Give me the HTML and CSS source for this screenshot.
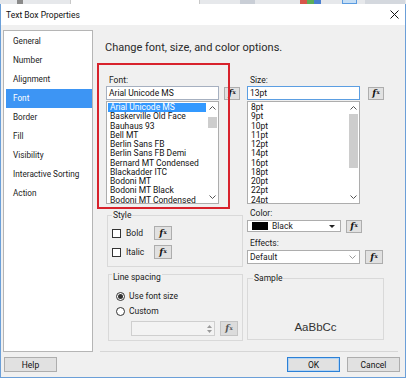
FILE: index.html
```html
<!DOCTYPE html>
<html>
<head>
<meta charset="utf-8">
<title>Text Box Properties</title>
<link rel="stylesheet" href="styles.css">
</head>
<body>
<div class="toolbar">
  <span class="tb tb-l"></span><span class="tb tb-dark"></span><span class="tb tb-gap1"></span><span class="tb tb-input"></span><span class="tb tb-gap2"></span><span class="tb tb-icon"></span><span class="tb tb-gap3"></span><span class="tb tb-red"></span><span class="tb tb-green"></span><span class="tb tb-blue"></span><span class="tb tb-gap4"></span><span class="tb tb-sel"></span><span class="tb tb-gap5"></span><span class="tb tb-icon2"></span>
</div>
<div class="window">
  <div class="titlebar">
    <span class="title">Text Box Properties</span>
    <svg class="close" viewBox="0 0 9 9" width="9" height="9"><path d="M0.5 0.5 L8.5 8.5 M8.5 0.5 L0.5 8.5" stroke="#111" stroke-width="1" fill="none"/></svg>
  </div>
  <div class="body">
    <ul class="nav">
      <li>General</li>
      <li>Number</li>
      <li>Alignment</li>
      <li class="active">Font</li>
      <li>Border</li>
      <li>Fill</li>
      <li>Visibility</li>
      <li>Interactive Sorting</li>
      <li>Action</li>
    </ul>
    <div class="main">
      <h1 class="heading">Change font, size, and color options.</h1>
      <div class="cols">
        <div class="col">
          <div class="lbl">Font:</div>
          <div class="row">
            <div class="input">Arial Unicode MS</div>
            <span class="fx"><i>f</i><sub>x</sub></span>
          </div>
          <div class="list">
            <ul class="items">
              <li class="sel">Arial Unicode MS</li>
              <li>Baskerville Old Face</li>
              <li>Bauhaus 93</li>
              <li>Bell MT</li>
              <li>Berlin Sans FB</li>
              <li>Berlin Sans FB Demi</li>
              <li>Bernard MT Condensed</li>
              <li>Blackadder ITC</li>
              <li>Bodoni MT</li>
              <li>Bodoni MT Black</li>
              <li>Bodoni MT Condensed</li>
            </ul>
            <div class="scroll">
              <div class="sarrow"><svg width="7" height="4" viewBox="0 0 7 4"><polyline points="0.5,3.5 3.5,0.5 6.5,3.5" fill="none" stroke="#555" stroke-width="1"/></svg></div>
              <div class="strack"><div class="thumb thumb-font"></div></div>
              <div class="sarrow"><svg width="7" height="4" viewBox="0 0 7 4"><polyline points="0.5,0.5 3.5,3.5 6.5,0.5" fill="none" stroke="#555" stroke-width="1"/></svg></div>
            </div>
          </div>
          <fieldset class="group style-group">
            <legend>Style</legend>
            <div class="chk-row">
              <span class="chk"></span><span class="chk-label">Bold</span>
              <span class="fx fx-lg"><i>f</i><sub>x</sub></span>
            </div>
            <div class="chk-row">
              <span class="chk"></span><span class="chk-label">Italic</span>
              <span class="fx fx-lg"><i>f</i><sub>x</sub></span>
            </div>
          </fieldset>
          <fieldset class="group spacing-group">
            <legend>Line spacing</legend>
            <div class="radio-row first">
              <span class="radio on"></span><span class="radio-label">Use font size</span>
            </div>
            <div class="radio-row">
              <span class="radio"></span><span class="radio-label">Custom</span>
            </div>
            <div class="spin-row">
              <div class="spinner">
                <div class="spin-btns">
                  <svg width="5" height="3" viewBox="0 0 5 3"><polygon points="0,3 2.5,0 5,3" fill="#9a9a9a"/></svg>
                  <svg width="5" height="3" viewBox="0 0 5 3"><polygon points="0,0 2.5,3 5,0" fill="#9a9a9a"/></svg>
                </div>
              </div>
              <span class="fx fx-lg fx-dis"><i>f</i><sub>x</sub></span>
            </div>
          </fieldset>
        </div>
        <div class="col">
          <div class="lbl">Size:</div>
          <div class="row">
            <div class="input focus">13pt</div>
            <span class="fx fx-far"><i>f</i><sub>x</sub></span>
          </div>
          <div class="list">
            <ul class="items">
              <li>8pt</li>
              <li>9pt</li>
              <li>10pt</li>
              <li>11pt</li>
              <li>12pt</li>
              <li>14pt</li>
              <li>16pt</li>
              <li>18pt</li>
              <li>20pt</li>
              <li>22pt</li>
              <li>24pt</li>
            </ul>
            <div class="scroll">
              <div class="sarrow"><svg width="7" height="4" viewBox="0 0 7 4"><polyline points="0.5,3.5 3.5,0.5 6.5,3.5" fill="none" stroke="#555" stroke-width="1"/></svg></div>
              <div class="strack"><div class="thumb thumb-size"></div></div>
              <div class="sarrow"><svg width="7" height="4" viewBox="0 0 7 4"><polyline points="0.5,0.5 3.5,3.5 6.5,0.5" fill="none" stroke="#555" stroke-width="1"/></svg></div>
            </div>
          </div>
          <div class="lbl lbl-color">Color:</div>
          <div class="row">
            <div class="dropdown color-dd">
              <span class="swatch"></span><span class="dd-text">Black</span>
              <svg class="dd-arrow" width="6" height="3" viewBox="0 0 6 3"><polygon points="0,0 6,0 3,3" fill="#222"/></svg>
            </div>
            <span class="fx"><i>f</i><sub>x</sub></span>
          </div>
          <div class="lbl lbl-effects">Effects:</div>
          <div class="row row-effects">
            <div class="dropdown effects-dd">
              <span class="dd-text">Default</span>
              <svg class="dd-chev" width="7" height="4" viewBox="0 0 7 4"><polyline points="0.5,0.5 3.5,3.5 6.5,0.5" fill="none" stroke="#999" stroke-width="1"/></svg>
            </div>
            <span class="fx fx-lg"><i>f</i><sub>x</sub></span>
          </div>
          <fieldset class="group sample-group">
            <legend>Sample</legend>
            <div class="sample">AaBbCc</div>
          </fieldset>
        </div>
      </div>
    </div>
  </div>
  <div class="footer">
    <span class="btn btn-help">Help</span>
    <span class="btn btn-ok">OK</span>
    <span class="btn btn-cancel">Cancel</span>
  </div>
  <div class="annot"></div>
</div>
</body>
</html>
```
FILE: styles.css
```css
* { box-sizing: border-box; }
html, body { margin: 0; padding: 0; }
body {
  width: 406px;
  height: 380px;
  overflow: hidden;
  background: #ffffff;
  font-family: Roboto, "Noto Sans", sans-serif;
  font-size: 8.5px;
  color: #1a1a1a;
}

/* toolbar remnant */
.toolbar { height: 4px; display: flex; background: #e6e8eb; }
.tb { display: block; height: 4px; }
.tb-l { width: 17px; }
.tb-dark { width: 6px; background: #8a8a8a; }
.tb-gap1 { width: 47px; }
.tb-input { width: 130px; background: #ffffff; border-left: 1px solid #c8c8c8; border-right: 1px solid #c8c8c8; }
.tb-gap2 { width: 40px; }
.tb-icon { width: 15px; background: #c9ced6; }
.tb-gap3 { width: 45px; }
.tb-red { width: 7px; background: #d8564a; }
.tb-green { width: 7px; background: #5cae58; }
.tb-blue { width: 7px; background: #4a7fd0; }
.tb-gap4 { width: 21px; }
.tb-sel { width: 15px; background: #c5def5; border: 1px solid #5a9be0; border-top: none; }
.tb-gap5 { width: 8px; }
.tb-icon2 { width: 40px; background: #d4d8de; }

/* window */
.window {
  position: relative;
  width: 406px;
  border: 1px solid #6b9fd8;
  border-top: none;
}
.titlebar {
  height: 21px;
  background: #ffffff;
  display: flex;
  align-items: center;
  justify-content: space-between;
  padding: 0 6px 0 5px;
}
.title { font-size: 8.5px; color: #111; }
.close { display: block; }

.body {
  height: 327px;
  background: #f0f0f0;
  display: flex;
  padding: 5px 7px 0 2px;
}

/* navigation */
.nav {
  list-style: none;
  margin: 0;
  padding: 1px 0 0;
  width: 90px;
  height: 322px;
  flex: none;
  background: #ffffff;
  border: 1px solid #b5b5b5;
}
.nav li {
  height: 19px;
  line-height: 19px;
  margin-left: 2px;
  padding-left: 7px;
  color: #222;
  white-space: nowrap;
  font-size: 8.2px;
}
.nav li.active { background: #3d95f4; color: #ffffff; }

/* main panel */
.main {
  flex: 1;
  margin-left: 7px;
  padding: 10px 0 0 6px;
  border-bottom: 1px solid #d6d6d6;
}
.heading {
  margin: 0 0 0 -1px;
  font-size: 11px;
  line-height: 16px;
  font-weight: normal;
  color: #2a2a2a;
}
.cols {
  display: grid;
  grid-template-columns: 137px 137px;
  column-gap: 4px;
  align-items: start;
  margin-top: 18px;
}
.col { display: flex; flex-direction: column; align-items: flex-start; }
.lbl { height: 12px; line-height: 12px; padding-left: 3px; }
.lbl-color { margin-top: 3px; }
.lbl-effects { margin-top: 4px; }
.row { display: flex; align-items: center; height: 14px; }
.row-effects { margin-top: 1px; }

.input {
  width: 113px;
  height: 14px;
  line-height: 12px;
  padding-left: 2px;
  background: #ffffff;
  border: 1px solid #a6b0c0;
  color: #111;
  white-space: nowrap;
}
.input.focus { border-color: #5b9ee2; }

.fx {
  display: flex;
  align-items: center;
  justify-content: center;
  width: 16px;
  height: 13px;
  margin-left: 5px;
  background: #e1e1e1;
  border: 1px solid #adadad;
  font-family: "DejaVu Serif", serif;
  color: #111;
  line-height: 1;
}
.fx i { font-style: italic; font-weight: bold; font-size: 9px; }
.fx sub { font-size: 5.5px; font-weight: bold; vertical-align: -1px; margin-left: 0.5px; }
.fx-far { margin-left: 8px; }
.fx-lg { width: 18px; height: 14px; }
.fx-dis { height: 15px; background: #dcdcdc; border-color: #c4c4c4; color: #555; }

/* list boxes */
.list {
  margin-top: 1px;
  width: 113px;
  height: 103px;
  display: flex;
  background: #ffffff;
  border: 1px solid #adadad;
  overflow: hidden;
}
.items {
  flex: 1;
  list-style: none;
  margin: 0;
  padding: 1px 1px 0 1px;
  overflow: hidden;
}
.items li {
  height: 9.25px;
  line-height: 9.25px;
  padding-left: 2px;
  white-space: nowrap;
  color: #111;
}
.items li.sel { background: #3399ff; color: #ffffff; }
.scroll { width: 11px; flex: none; display: flex; flex-direction: column; background: #ffffff; }
.sarrow { height: 12px; display: flex; align-items: center; justify-content: center; }
.sarrow svg { display: block; }
.strack { flex: 1; }
.thumb { margin: 0 1px; background: #cdcdcd; }
.thumb-font { margin-top: 3px; height: 11px; }
.thumb-size { margin-top: 0; height: 54px; }

/* group boxes */
.group {
  margin: 0;
  border: 1px solid #d9d9d9;
  min-width: 0;
}
.group legend { padding: 0 1px; line-height: 12px; }
.style-group {
  margin: 5px 0 0 1px;
  width: 136px;
  padding: 0 0 7px 4px;
}
.chk-row { display: flex; align-items: center; height: 14px; margin-top: 5px; }
.chk { width: 9px; height: 9px; background: #ffffff; border: 1px solid #333; flex: none; }
.chk-label { width: 28px; margin-left: 5px; }
.chk-row .fx { margin-left: 0; }

.spacing-group {
  margin: -2px 0 0 2px;
  width: 135px;
  padding: 0 0 4px 3px;
}
.spacing-group legend { padding-top: 6px; }
.radio-row { display: flex; align-items: center; height: 12px; margin-top: 3px; margin-left: 4px; }
.radio-row.first { margin-top: 7px; }
.radio {
  width: 9px; height: 9px; border-radius: 50%;
  border: 1px solid #333; background: #ffffff;
  display: flex; align-items: center; justify-content: center; flex: none;
}
.radio.on::after { content: ""; width: 5px; height: 5px; border-radius: 50%; background: #333; }
.radio-label { margin-left: 4px; }
.spin-row { display: flex; align-items: center; height: 15px; margin-top: 4px; margin-left: 19px; }
.spinner {
  width: 84px; height: 15px;
  background: #f3f3f3;
  border: 1px solid #cfcfcf;
  display: flex; justify-content: flex-end;
}
.spin-btns { width: 10px; display: flex; flex-direction: column; align-items: center; justify-content: center; gap: 2px; }
.spin-btns svg { display: block; }

/* dropdowns */
.dropdown {
  display: flex; align-items: center;
  background: #ffffff;
  border: 1px solid #adadad;
}
.color-dd { width: 94px; height: 12px; padding: 0 5px 0 4px; }
.swatch { width: 16px; height: 8px; background: #000; margin-right: 4px; flex: none; }
.dd-arrow { margin-left: auto; display: block; }
.effects-dd { width: 113px; height: 14px; padding: 0 3px 0 2px; }
.dd-chev { margin-left: auto; display: block; }
.row-effects .fx { margin-left: 5px; }

.sample-group {
  margin-top: 8px;
  width: 137px;
  padding: 0;
}
.sample-group legend { margin-left: 5px; }
.sample {
  height: 55px;
  display: flex;
  align-items: flex-end;
  justify-content: center;
  padding-bottom: 5px;
  font-family: "Liberation Sans", Arial, sans-serif;
  font-size: 11.5px;
  line-height: 14px;
  color: #333;
}

/* footer */
.footer {
  height: 25px;
  display: flex;
  align-items: flex-start;
  padding: 5px 5px 0 3px;
  background: #f0f0f0;
}
.btn {
  width: 53px; height: 15px;
  display: flex; align-items: center; justify-content: center;
  background: #e1e1e1;
  border: 1px solid #adadad;
  color: #111;
}
.btn-help { margin-right: auto; }
.btn-ok { border-color: #2b80d6; box-shadow: inset 0 0 0 1px #b3d3f2; }
.btn-cancel { margin-left: 7px; }

/* red annotation box */
.annot {
  position: absolute;
  left: 96px;
  top: 59px;
  width: 133px;
  height: 146px;
  border: 2px solid #d8222c;
  pointer-events: none;
}
```
